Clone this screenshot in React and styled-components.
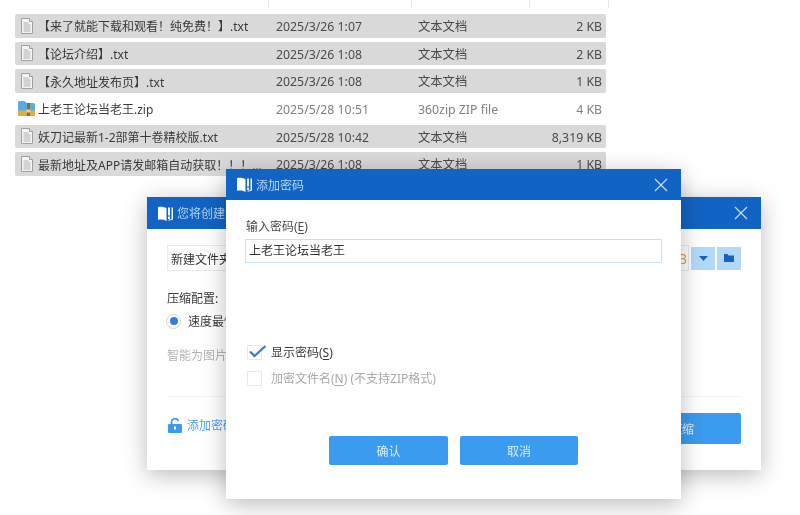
import React from "react";
import styled, { createGlobalStyle } from "styled-components";

const FONT = `"Noto Sans", "Noto Sans CJK SC", sans-serif`;

const Global = createGlobalStyle`
  html, body { margin: 0; padding: 0; background: #fff; }
  body { font-family: ${FONT}; overflow: hidden; }
`;

const Desktop = styled.div`
  position: relative;
  width: 800px;
  height: 515px;
  overflow: hidden;
  background: #fff;
  filter: blur(0.45px);
`;

const ColumnHead = styled.div`
  display: grid;
  grid-template-columns: 269px 143px 118px 79px;
  height: 8px;
  > div { border-right: 1px solid #e6e6e6; }
`;

const List = styled.div`
  display: flex;
  flex-direction: column;
  gap: 4.07px;
  width: 591px;
  margin: 6px 0 0 15px;
`;

const Row = styled.div`
  display: grid;
  grid-template-columns: 261px 142px 112px 1fr;
  align-items: center;
  height: 23.6px;
  border-radius: 2px;
  background: ${(p) => (p.$selected ? "#d9d9d9" : "transparent")};
  color: ${(p) => (p.$selected ? "#4a4a4a" : "#808080")};
  font-size: 12.3px;
  line-height: 1;
  white-space: nowrap;
`;

const Cell = styled.div`
  padding-top: 3px;
`;

const NameCell = styled.div`
  display: flex;
  align-items: center;
  min-width: 0;
  padding-left: ${(p) => (p.$zip ? "3px" : "6px")};
  color: #3a3a3a;
  font-size: 12px;
`;

const IconSlot = styled.span`
  display: flex;
  flex: none;
  width: ${(p) => (p.$zip ? "20px" : "17px")};
`;

const NameText = styled.span`
  padding-top: 3px;
`;

const SizeCell = styled(Cell)`
  text-align: right;
  padding-right: 4px;
`;

const Window = styled.section`
  position: absolute;
  left: ${(p) => p.$x}px;
  top: ${(p) => p.$y}px;
  width: ${(p) => p.$w}px;
  height: ${(p) => p.$h}px;
  display: flex;
  flex-direction: column;
  background: #fff;
  box-shadow: 0 5px 22px rgba(0, 0, 0, 0.27);
`;

const TitleBar = styled.header`
  flex: none;
  display: flex;
  align-items: center;
  gap: 4px;
  height: ${(p) => p.$h}px;
  padding: 0 13px 0 11px;
  background: #1264c4;
  color: #b9d3f0;
  font-size: 12px;
`;

const TitleText = styled.span`
  flex: 1;
  white-space: nowrap;
`;

const BackBody = styled.div`
  flex: 1;
  display: flex;
  flex-direction: column;
  padding: 16px 20px 26px 20px;
  color: #3a3a3a;
  font-size: 12px;
`;

const PathRow = styled.div`
  display: flex;
  align-items: center;
  gap: 2px;
  height: 26px;
`;

const PathInput = styled.div`
  flex: 1;
  height: 100%;
  display: flex;
  align-items: center;
  justify-content: space-between;
  padding: 1px 1px 0 3px;
  border: 1px solid #e3eaf0;
  box-sizing: border-box;
  font-size: 12px;
  color: #333;
`;

const Hint = styled.span`
  color: #e8a33d;
  font-size: 13.5px;
`;

const PathButton = styled.div`
  flex: none;
  display: flex;
  align-items: center;
  justify-content: center;
  width: 24px;
  height: 23px;
  background: #b3d9f9;
`;

const ConfigLabel = styled.div`
  margin-top: 21px;
  line-height: 14px;
`;

const RadioRow = styled.div`
  display: flex;
  align-items: center;
  gap: 7px;
  margin-top: 7px;
  height: 16px;
  margin-left: -1px;
`;

const Radio = styled.span`
  box-sizing: border-box;
  display: flex;
  align-items: center;
  justify-content: center;
  width: 15px;
  height: 15px;
  border: 1px solid #d5d5d5;
  border-radius: 50%;
  &::after {
    content: "";
    width: 8px;
    height: 8px;
    border-radius: 50%;
    background: #2f7fe0;
  }
`;

const SmartNote = styled.div`
  margin-top: 20px;
  color: #b3b3b3;
  line-height: 14px;
`;

const Divider = styled.hr`
  width: 100%;
  margin: 33px 0 0;
  border: 0;
  border-top: 1px solid #f4f4f4;
`;

const BackFooter = styled.div`
  display: flex;
  align-items: center;
  justify-content: space-between;
  margin-top: 16px;
`;

const LockLink = styled.span`
  display: flex;
  align-items: center;
  gap: 5px;
  margin-bottom: 7px;
  padding-left: 1px;
  color: #4a9fec;
  font-size: 12px;
`;

const FrontBody = styled.div`
  flex: 1;
  display: flex;
  flex-direction: column;
  padding: 19px 19px 34px 19px;
  color: #3a3a3a;
  font-size: 12px;
`;

const FieldLabel = styled.label`
  line-height: 16px;
  padding-left: 1px;
  color: #4a4a4a;
`;

const PasswordInput = styled.div`
  box-sizing: border-box;
  display: flex;
  align-items: center;
  height: 24px;
  margin-top: 4px;
  padding: 0 0 3px 3px;
  border: 1px solid #c6e0f5;
  font-size: 12px;
  color: #333;
`;

const CheckRow = styled.div`
  display: flex;
  align-items: center;
  gap: 9px;
  height: 16px;
  margin-top: ${(p) => p.$top}px;
  padding-left: 2px;
  color: ${(p) => (p.$disabled ? "#a8a8a8" : "#3a3a3a")};
  font-size: 12px;
`;

const CheckBox = styled.span`
  position: relative;
  box-sizing: border-box;
  flex: none;
  width: 15px;
  height: 15px;
  border: 1px solid #e8e8e8;
`;

const CheckMark = styled.svg`
  position: absolute;
  left: 1px;
  top: -1px;
`;

const ButtonRow = styled.div`
  display: flex;
  justify-content: center;
  gap: 12px;
  margin-top: auto;
`;

const ActionButton = styled.button`
  width: ${(p) => p.$w}px;
  height: ${(p) => p.$h}px;
  padding: ${(p) => p.$pad || 0};
  border: 0;
  border-radius: 2px;
  background: #3b9bef;
  color: #dcecfb;
  font-family: ${FONT};
  font-size: 12px;
  text-align: ${(p) => p.$align || "center"};
`;

const Under = styled.u`
  text-underline-offset: 2px;
`;

const DocIcon = () => (
  <svg width="12" height="16" viewBox="0 0 12 16">
    <path d="M.5.5h8l3 3v12H.5z" fill="#f4f4f4" stroke="#a0a0a0" />
    <path d="M8.500.5v3h3" fill="#e6e6e6" stroke="#a0a0a0" />
    <path d="M2.500 5h5M2.500 7h7M2.500 9h7M2.500 11h7M2.500 13h7" stroke="#b0b0b0" />
  </svg>
);

const ZipIcon = () => (
  <svg width="17" height="15" viewBox="0 0 17 15">
    <path d="M0 1.500A1.500 1.500 0 0 1 1.500 0h5l2 2h7A1.500 1.500 0 0 1 17 3.500V13.500A1.500 1.500 0 0 1 15.500 15H1.500A1.500 1.500 0 0 1 0 13.500z" fill="#55ace8" />
    <path d="M0 9.500h17v4a1.500 1.500 0 0 1-1.500 1.500H1.500A1.500 1.500 0 0 1 0 13.500z" fill="#e3aa46" />
    <rect x="9" y="2" width="3" height="13" fill="#8a6a35" />
    <rect x="8.500" y="8.500" width="4" height="3" fill="#f3d27a" />
  </svg>
);

const BookIcon = () => (
  <svg width="15" height="15" viewBox="0 0 15 15">
    <path d="M0 1C3 .300 6 .800 8.500 2.200V15C6 13.600 3 13.300 0 13.800z" fill="#fff" />
    <rect x="10" y="1.500" width="2" height="8" fill="#eef4fb" />
    <path d="M10 10.500h2v2l-1 1-1-1z" fill="#eef4fb" />
    <path d="M13.500 1.500H15V13.500L10 15l1.500-1.500 2-.5z" fill="#eef4fb" />
  </svg>
);

const CloseIcon = () => (
  <svg width="14" height="14" viewBox="0 0 14 14">
    <path d="M1 1l12 12M13 1L1 13" stroke="#c8dcf3" strokeWidth="1.200" fill="none" />
  </svg>
);

const rows = [
  { name: "【来了就能下载和观看！纯免费！】.txt", date: "2025/3/26 1:07", type: "文本文档", size: "2 KB", sel: true },
  { name: "【论坛介绍】.txt", date: "2025/3/26 1:08", type: "文本文档", size: "2 KB", sel: true },
  { name: "【永久地址发布页】.txt", date: "2025/3/26 1:08", type: "文本文档", size: "1 KB", sel: true },
  { name: "上老王论坛当老王.zip", date: "2025/5/28 10:51", type: "360zip ZIP file", size: "4 KB", zip: true },
  { name: "妖刀记最新1-2部第十卷精校版.txt", date: "2025/5/28 10:42", type: "文本文档", size: "8,319 KB", sel: true },
  { name: "最新地址及APP请发邮箱自动获取！！！...", date: "2025/3/26 1:08", type: "文本文档", size: "1 KB", sel: true },
];

export default function App() {
  return (
    <>
      <Global />
      <Desktop>
        <ColumnHead>
          <div /><div /><div /><div />
        </ColumnHead>
        <List>
          {rows.map((r) => (
            <Row key={r.name} $selected={r.sel}>
              <NameCell $zip={r.zip}>
                <IconSlot $zip={r.zip}>{r.zip ? <ZipIcon /> : <DocIcon />}</IconSlot>
                <NameText>{r.name}</NameText>
              </NameCell>
              <Cell>{r.date}</Cell>
              <Cell>{r.type}</Cell>
              <SizeCell>{r.size}</SizeCell>
            </Row>
          ))}
        </List>

        <Window $x={147} $y={197} $w={614} $h={273}>
          <TitleBar $h={32}>
            <BookIcon />
            <TitleText>您将创建一</TitleText>
            <CloseIcon />
          </TitleBar>
          <BackBody>
            <PathRow>
              <PathInput>
                新建文件夹.zip
                <Hint>B</Hint>
              </PathInput>
              <PathButton>
                <svg width="9" height="5" viewBox="0 0 9 5"><path d="M0 0h9L4.500 5z" fill="#1565c0" /></svg>
              </PathButton>
              <PathButton>
                <svg width="10" height="8" viewBox="0 0 10 8"><path d="M0 0h3.500l1 1.500H10V8H0z" fill="#1565c0" /></svg>
              </PathButton>
            </PathRow>
            <ConfigLabel>压缩配置:</ConfigLabel>
            <RadioRow>
              <Radio />
              速度最快
            </RadioRow>
            <SmartNote>智能为图片</SmartNote>
            <Divider />
            <BackFooter>
              <LockLink>
                <svg width="14" height="15" viewBox="0 0 14 15">
                  <path d="M3.500 6V4a3.500 3.500 0 0 1 6.800-1" fill="none" stroke="#3b9bef" strokeWidth="1.800" />
                  <rect y="6" width="14" height="9" rx="1.200" fill="#3b9bef" />
                  <rect x="6" y="8.500" width="2" height="3" fill="#fff" />
                </svg>
                添加密码
              </LockLink>
              <ActionButton $w={120} $h={31} $align="right" $pad="0 47px 0 0">压缩</ActionButton>
            </BackFooter>
          </BackBody>
        </Window>

        <Window $x={226} $y={169} $w={455} $h={330}>
          <TitleBar $h={31}>
            <BookIcon />
            <TitleText>添加密码</TitleText>
            <CloseIcon />
          </TitleBar>
          <FrontBody>
            <FieldLabel>输入密码(<Under>E</Under>)</FieldLabel>
            <PasswordInput>上老王论坛当老王</PasswordInput>
            <CheckRow $top={81}>
              <CheckBox>
                <CheckMark width="18" height="13" viewBox="0 0 18 13">
                  <path d="M1 6.500l4.500 4.500L16.500 1" fill="none" stroke="#3a78cf" strokeWidth="2.200" />
                </CheckMark>
              </CheckBox>
              <span>显示密码(<Under>S</Under>)</span>
            </CheckRow>
            <CheckRow $top={10} $disabled>
              <CheckBox />
              <span>加密文件名(<Under>N</Under>) (不支持ZIP格式)</span>
            </CheckRow>
            <ButtonRow>
              <ActionButton $w={119} $h={29}>确认</ActionButton>
              <ActionButton $w={118} $h={29}>取消</ActionButton>
            </ButtonRow>
          </FrontBody>
        </Window>
      </Desktop>
    </>
  );
}
